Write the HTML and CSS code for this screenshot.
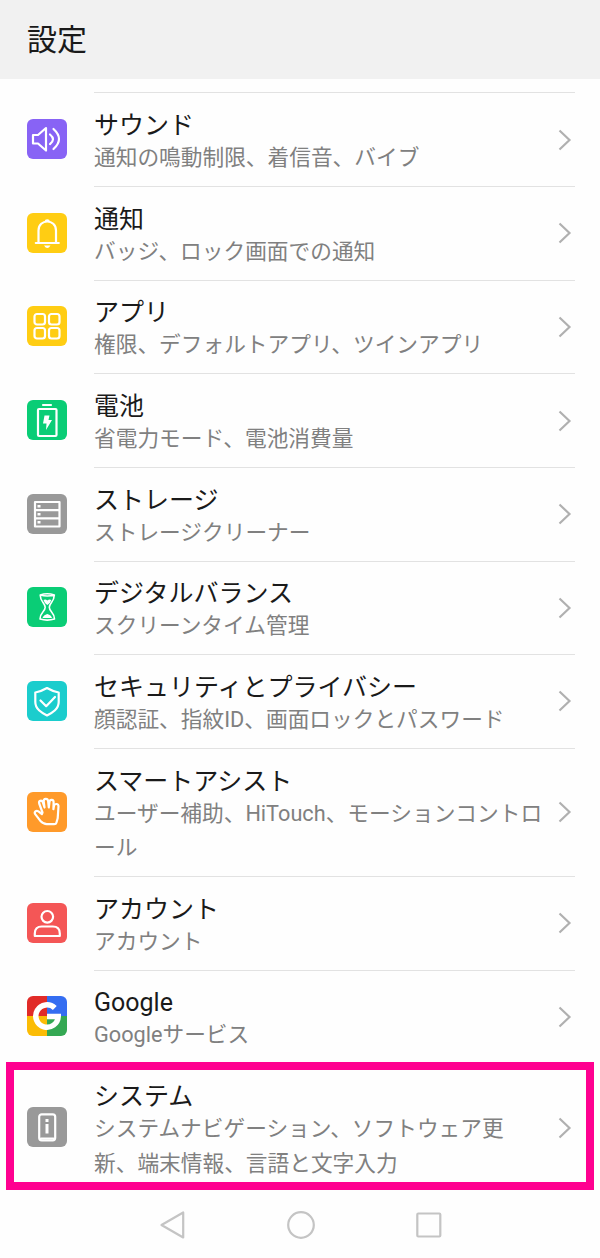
FILE: index.html
```html
<!DOCTYPE html>
<html lang="ja">
<head>
    <meta charset="UTF-8">
    <meta name="viewport" content="width=device-width, initial-scale=1.0">
    <title>設定</title>
    <link rel="stylesheet" href="styles.css">
</head>
<body>
    <header>
        <h1>設定</h1>
    </header>

    <main class="settings">
        <a class="row" href="#sound">
            <svg class="icon purple" viewBox="0 0 40 40"><path d="M6 16v8.500h5l8 7V9l-8 7z"/><path d="M23 15.500q6 4.800 0 9.600M26.500 10q11 10 0 20"/></svg>
            <div class="content">
                <div class="text">
                    <h2>サウンド</h2>
                    <p>通知の鳴動制限、着信音、バイブ</p>
                </div>
                <svg class="chevron" viewBox="0 0 14 22"><path d="M1.500 1.500L11.500 11L1.500 20.500"/></svg>
            </div>
        </a>
        <a class="row" href="#notice">
            <svg class="icon yellow" viewBox="0 0 40 40"><path d="M8.800 30h23M11.500 30V17.500c0-12 17.500-12 17.500 0V30"/><path class="solid" d="M17.500 8.500a2.800 2.800 0 0 1 5.500 0zM17 32.500h6.500q-3.200 5-6.500 0z"/></svg>
            <div class="content">
                <div class="text">
                    <h2>通知</h2>
                    <p>バッジ、ロック画面での通知</p>
                </div>
                <svg class="chevron" viewBox="0 0 14 22"><path d="M1.500 1.500L11.500 11L1.500 20.500"/></svg>
            </div>
        </a>
        <a class="row" href="#apps">
            <svg class="icon yellow" viewBox="0 0 40 40"><rect x="7.500" y="8" width="10.500" height="10.500" rx="2.500"/><rect x="22" y="8" width="10.500" height="10.500" rx="2.500"/><rect x="7.500" y="22" width="10.500" height="10.500" rx="2.500"/><rect x="22" y="22" width="10.500" height="10.500" rx="2.500"/></svg>
            <div class="content">
                <div class="text">
                    <h2>アプリ</h2>
                    <p>権限、デフォルトアプリ、ツインアプリ</p>
                </div>
                <svg class="chevron" viewBox="0 0 14 22"><path d="M1.500 1.500L11.500 11L1.500 20.500"/></svg>
            </div>
        </a>
        <a class="row" href="#battery">
            <svg class="icon green" viewBox="0 0 40 40"><path d="M16 5h8"/><rect x="11" y="9" width="18.500" height="27" rx="1"/><path class="solid" d="M17.500 15.500h5l-1 4.500h3.500L19 30l.5-6.500h-3.500z"/></svg>
            <div class="content">
                <div class="text">
                    <h2>電池</h2>
                    <p>省電力モード、電池消費量</p>
                </div>
                <svg class="chevron" viewBox="0 0 14 22"><path d="M1.500 1.500L11.500 11L1.500 20.500"/></svg>
            </div>
        </a>
        <a class="row" href="#storage">
            <svg class="icon gray" viewBox="0 0 40 40"><path d="M8 8h24.500v24.500H8zM8 16.200h24.500M8 24.300h24.500"/><path class="solid" d="M10.500 11h3v2.500h-3zM10.500 19h3v2.500h-3zM10.500 27h3v2.500h-3z"/></svg>
            <div class="content">
                <div class="text">
                    <h2>ストレージ</h2>
                    <p>ストレージクリーナー</p>
                </div>
                <svg class="chevron" viewBox="0 0 14 22"><path d="M1.500 1.500L11.500 11L1.500 20.500"/></svg>
            </div>
        </a>
        <a class="row" href="#balance">
            <svg class="icon green thin" viewBox="0 0 40 40"><path d="M13.200 8q7-2.500 14.200 0-7 2-14.200 0c0 7 5 8 5 12.300s-5.200 5-5.200 11.700q7.200 2.200 14.500 0c0-6.700-5.200-7.500-5.200-11.700s5-5.300 5-12.300"/><path class="solid" d="M16.500 13q2-1 3.800.5 2-1.500 4-.5-.5 2.500-4 5-3.300-2.500-3.800-5zM15.500 31q1-3 4.800-4 4 1 4.700 4z"/></svg>
            <div class="content">
                <div class="text">
                    <h2>デジタルバランス</h2>
                    <p>スクリーンタイム管理</p>
                </div>
                <svg class="chevron" viewBox="0 0 14 22"><path d="M1.500 1.500L11.500 11L1.500 20.500"/></svg>
            </div>
        </a>
        <a class="row" href="#security">
            <svg class="icon cyan" viewBox="0 0 40 40"><path d="M20 7q6 3.500 11.700 4.500v9.500c0 7-6 10.500-11.700 13.500-5.700-3-11.700-6.500-11.700-13.500v-9.500q5.700-1 11.700-4.500zM13.500 19.500l5.700 5.700 8.800-9.200"/></svg>
            <div class="content">
                <div class="text">
                    <h2>セキュリティとプライバシー</h2>
                    <p>顔認証、指紋ID、画面ロックとパスワード</p>
                </div>
                <svg class="chevron" viewBox="0 0 14 22"><path d="M1.500 1.500L11.500 11L1.500 20.500"/></svg>
            </div>
        </a>
        <a class="row" href="#assist">
            <svg class="icon orange" viewBox="0 0 40 40"><path d="M15.500 20.500L12.200 11.500c-.8-2.800 2.400-3.800 3.600-1.300l1.700 5.300-.8-6.200c-.1-3 4-3.200 4.400-.3l.7 6.500.7-5.700c.4-2.800 4.200-2.400 4.100.4l-.2 7 .6-3.500c.5-2.500 4.500-2.200 4.500.5l-.8 12-1.300 4.500q-.4 1.500-2.200 1.500h-7.500c-2.500 0-4.500-1.500-6.500-3.500l-5-6.500c-1.400-2.200 1-4.300 3.200-2.800l3.500 2.600z"/></svg>
            <div class="content">
                <div class="text">
                    <h2>スマートアシスト</h2>
                    <p>ユーザー補助、HiTouch、モーションコントロ<br>ール</p>
                </div>
                <svg class="chevron" viewBox="0 0 14 22"><path d="M1.500 1.500L11.500 11L1.500 20.500"/></svg>
            </div>
        </a>
        <a class="row" href="#account">
            <svg class="icon red" viewBox="0 0 40 40"><circle cx="20.300" cy="13.800" r="5.800"/><path d="M7.800 33h25v-2.500c0-4.500-2.500-7-7-7h-11c-4.500 0-7 2.500-7 7z"/></svg>
            <div class="content">
                <div class="text">
                    <h2>アカウント</h2>
                    <p>アカウント</p>
                </div>
                <svg class="chevron" viewBox="0 0 14 22"><path d="M1.500 1.500L11.500 11L1.500 20.500"/></svg>
            </div>
        </a>
        <a class="row" href="#google">
            <svg class="icon google" viewBox="0 0 40 40"><path d="M27.800 12A11.200 11.200 0 1 0 31.200 20.500H20"/></svg>
            <div class="content">
                <div class="text">
                    <h2>Google</h2>
                    <p>Googleサービス</p>
                </div>
                <svg class="chevron" viewBox="0 0 14 22"><path d="M1.500 1.500L11.500 11L1.500 20.500"/></svg>
            </div>
        </a>
        <a class="row highlight" href="#system">
            <svg class="icon gray" viewBox="0 0 40 40"><rect x="12.200" y="7.300" width="16" height="26" rx="2.500"/><path d="M14 31.500h12.500"/><path class="solid" d="M18.500 12h3v3h-3zM18.500 17h3v9.500h-3z"/></svg>
            <div class="content">
                <div class="text">
                    <h2>システム</h2>
                    <p>システムナビゲーション、ソフトウェア更<br>新、端末情報、言語と文字入力</p>
                </div>
                <svg class="chevron" viewBox="0 0 14 22"><path d="M1.500 1.500L11.500 11L1.500 20.500"/></svg>
            </div>
        </a>
    </main>

    <nav class="navbar">
        <svg viewBox="0 0 30 30"><path d="M3.500 15L25.200 2.500v25z"/></svg>
        <svg viewBox="0 0 30 30"><circle cx="15" cy="15" r="12.800"/></svg>
        <svg viewBox="0 0 30 30"><rect x="3.300" y="3.500" width="23" height="23" rx="1"/></svg>
    </nav>
</body>
</html>
```
FILE: styles.css
```css
body {
    margin: 0;
    height: 1258px;
    display: flex;
    flex-direction: column;
    font-family: Roboto, 'Noto Sans CJK JP', sans-serif;
    color: #1a1a1a;
    background-color: #fefefe;
    overflow: hidden;
}
header {
    height: 79px;
    box-sizing: border-box;
    padding: 0 27px;
    display: flex;
    align-items: center;
    background-color: #f1f1f1;
}
h1, h2, p {
    margin: 0;
    font-weight: 400;
}
h1 {
    font-size: 30px;
    line-height: 40px;
}
.settings {
    padding-top: 13.300px;
}
.row {
    position: relative;
    display: flex;
    align-items: center;
    padding: 0 25px 0 27px;
    color: inherit;
    text-decoration: none;
}
.icon {
    flex: none;
    width: 40px;
    height: 40px;
    margin-right: 27px;
    border-radius: 6px;
    fill: none;
    stroke: #fff;
    stroke-width: 2.2;
    stroke-linejoin: round;
    stroke-linecap: round;
}
.icon .solid {
    fill: #fff;
    stroke: none;
}
.icon.thin {
    stroke-width: 1.6;
}
.purple {
    background-color: #8863f5;
}
.yellow {
    background-color: #ffcd13;
}
.green {
    background-color: #0acd76;
}
.gray {
    background-color: #999;
}
.cyan {
    background-color: #1bcdcd;
}
.orange {
    background-color: #ff9a2a;
}
.red {
    background-color: #f45656;
}
.icon.google {
    background: conic-gradient(#346df1 25%, #34a853 0 50%, #fbbc05 0 75%, #e12b28 0);
    stroke-width: 5.5;
    stroke-linecap: butt;
    stroke-linejoin: miter;
}
.content {
    flex: 1;
    display: flex;
    align-items: center;
    justify-content: space-between;
    box-sizing: border-box;
    padding: 0 3px 0 0;
    border-top: 1px solid #e2e2e2;
}
.text {
    padding: 17.800px 0 10.350px;
    white-space: nowrap;
}
h2 {
    font-size: 25px;
    line-height: 30px;
}
p {
    font-size: 21.700px;
    line-height: 34.500px;
    color: #808080;
}
.chevron {
    flex: none;
    width: 14px;
    height: 22px;
    fill: none;
    stroke: #b0b0b0;
    stroke-width: 2.2;
}
.highlight::after {
    content: '';
    position: absolute;
    top: -1px;
    left: 6px;
    right: 6px;
    height: 112px;
    border: 8px solid #ff0090;
}
.navbar {
    flex: 1;
    display: flex;
    align-items: center;
    justify-content: center;
    gap: 98px;
    padding-left: 2px;
}
.navbar svg {
    width: 30px;
    height: 30px;
    fill: none;
    stroke: #c4c4c4;
    stroke-width: 2.2;
    stroke-linejoin: round;
}
```
